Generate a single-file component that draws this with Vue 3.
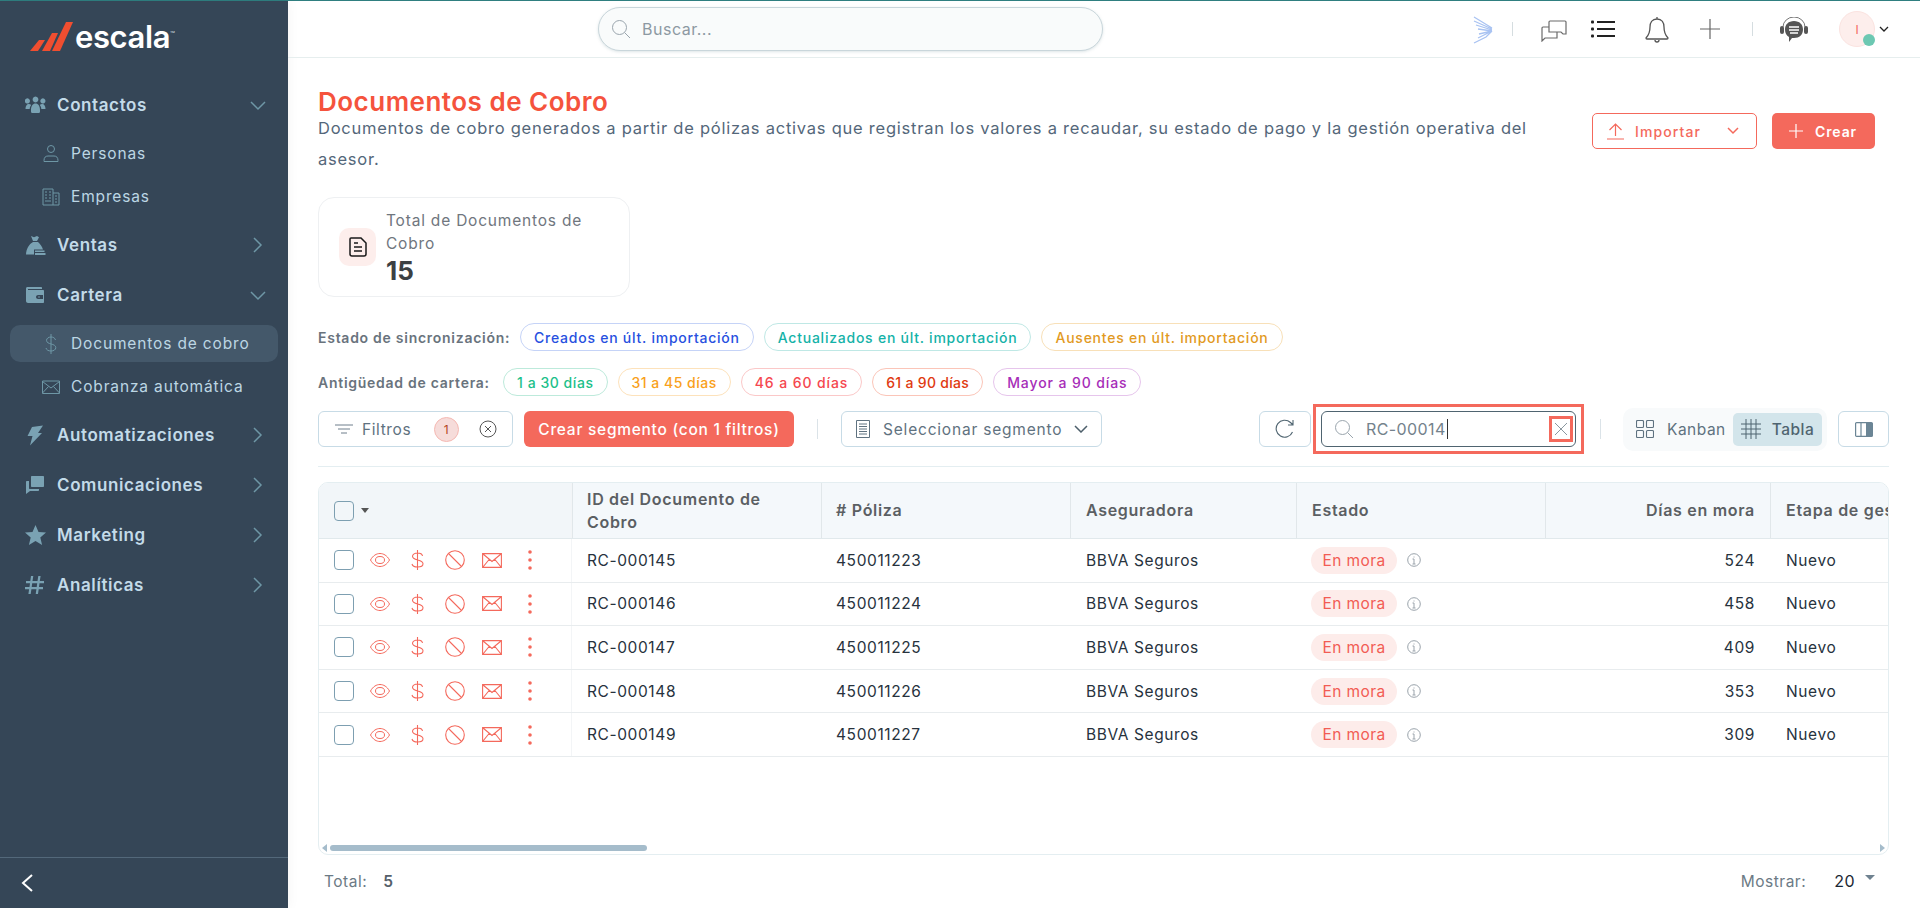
<script setup>
const icons = {
  people: 'M5 6a2.600 2.600 0 1 1 0-.01zM20.500 6a2.600 2.600 0 1 1 0-.01zM13.400 4.500a2.900 2.900 0 1 1 0-.01zM.500 14c0-3 1.200-5 3.300-5 1 0 1.800.3 2.400 1-1 1.200-1.500 2.500-1.500 4zM20.500 14c0-3-1.200-5-3.300-5-1 0-1.800.3-2.400 1 1 1.200 1.500 2.500 1.500 4zM6 15c0-4 1.800-6.500 4.500-6.500S15 11 15 15v1.500c0 1-.8 1.500-1.500 1.500h-6c-.7 0-1.500-.5-1.500-1.500z',
  bag: 'M6 1l3 1.200L12 1l2 1.200-2 3.800H8zM8 7h5c2 1.500 4 4.500 5 7.500H9v5H1C1.200 14 4 9 8 7zM10 15.500h9.500V17H10zM10 18h10.500v2H10z',
  wallet: 'M2 2h14c.6 0 1 .4 1 1v1H3v1h15c.6 0 1 .4 1 1v11c0 .6-.4 1-1 1H3c-1 0-2-1-2-2V4c0-1 .4-2 1-2zm11 8c-1 0-2 .8-2 2s1 2 2 2h5v-4zm1 1.200a.8.800 0 1 1 0 1.600.8.800 0 0 1 0-1.600z',
  bolt: 'M7 2L18 .5 13 8h4L5 20.500 7.500 11h-5z',
  chat: 'M7 1h11c.6 0 1 .4 1 1v9c0 .6-.4 1-1 1h-2v0H7c-.6 0-1-.4-1-1V2c0-.6.4-1 1-1zM4 6v7c0 .6.4 1 1 1h9v1c0 .6-.4 1-1 1H5l-4 3V7c0-.6.4-1 1-1z',
  star: 'M10.500 0l3 7 7.500.6-5.700 5 1.800 7.400-6.600-4-6.600 4 1.800-7.400L0 7.600 7.500 7z',
  hash: 'M6 1h2.300L7.500 6h5l.8-5h2.300l-.8 5H19v2.200h-4.500L14 12h4v2.200h-4.300L13 19h-2.300l.7-4.800h-5L5.700 19H3.400l.7-4.800H0V12h4.500L5 8.200H1V6h4.300zm1.200 7.200L6.700 12h5l.5-3.800z'
}

const sideMenu = [
  { label: 'Contactos', icon: 'people', open: true, children: [
    { label: 'Personas', icon: 'person' },
    { label: 'Empresas', icon: 'building' }
  ] },
  { label: 'Ventas', icon: 'bag' },
  { label: 'Cartera', icon: 'wallet', open: true, children: [
    { label: 'Documentos de cobro', icon: 'dollar', active: true },
    { label: 'Cobranza automática', icon: 'mail' }
  ] },
  { label: 'Automatizaciones', icon: 'bolt' },
  { label: 'Comunicaciones', icon: 'chat' },
  { label: 'Marketing', icon: 'star' },
  { label: 'Analíticas', icon: 'hash' }
]

const syncChips = [
  { text: 'Creados en últ. importación', cls: 'blue' },
  { text: 'Actualizados en últ. importación', cls: 'teal' },
  { text: 'Ausentes en últ. importación', cls: 'amber' }
]
const ageChips = [
  { text: '1 a 30 días', cls: 'green' },
  { text: '31 a 45 días', cls: 'orange' },
  { text: '46 a 60 días', cls: 'red' },
  { text: '61 a 90 días', cls: 'deep' },
  { text: 'Mayor a 90 días', cls: 'purple' }
]

const rows = [
  { id: 'RC-000145', poliza: '450011223', dias: 524 },
  { id: 'RC-000146', poliza: '450011224', dias: 458 },
  { id: 'RC-000147', poliza: '450011225', dias: 409 },
  { id: 'RC-000148', poliza: '450011226', dias: 353 },
  { id: 'RC-000149', poliza: '450011227', dias: 309 }
]
</script>

<template>
  <div class="app">
    <aside class="sidebar">
      <div class="logo">
        <svg width="46" height="32" viewBox="0 0 46 32">
          <polygon fill="#f04e30" points="9,19 15,19 8,30 0,30" />
          <polygon fill="#f04e30" points="22,12 28,12 20,30 12,30" />
          <polygon fill="#f04e30" points="36,1 43,1 30,30 22,30" />
        </svg>
        <span class="logo-text">escala</span><span class="logo-tm">™</span>
      </div>
      <nav class="menu">
        <template v-for="item in sideMenu" :key="item.label">
          <div class="menu-item">
            <svg class="menu-icon" width="21" height="21" viewBox="0 0 21 21"><path :d="icons[item.icon]" fill="#7aa2b3" fill-rule="evenodd" /></svg>
            <span class="menu-label">{{ item.label }}</span>
            <svg class="menu-arrow" width="16" height="16" viewBox="0 0 16 16" fill="none" stroke="#6e97a6" stroke-width="1.500">
              <path v-if="item.open" d="M1 5l7 7 7-7" />
              <path v-else d="M4 1l7 7-7 7" />
            </svg>
          </div>
          <div v-for="sub in item.children" :key="sub.label" class="sub-item" :class="{ active: sub.active }">
            <svg class="sub-icon" width="20" height="20" viewBox="0 0 20 20" fill="none" stroke="#6e97a6" stroke-width="1">
              <template v-if="sub.icon === 'person'">
                <circle cx="10" cy="5" r="3.500" />
                <path d="M3 16.500c0-3 1.500-4.500 4-4.500h6c2.500 0 4 1.500 4 4.500v1H3z" />
              </template>
              <template v-else-if="sub.icon === 'building'">
                <path d="M2 2h10v16H2zM12 6h6v12h-6M4 5h2M8 5h2M4 8h2M8 8h2M4 11h2M8 11h2M4 14h6M14 9h2M14 12h2M14 15h2" />
              </template>
              <template v-else-if="sub.icon === 'dollar'">
                <path d="M14.500 6c-.5-2-2.300-3-4.500-3S5.500 4.300 5.500 6.300C5.500 11 14.800 9 14.800 13.700c0 2-2.200 3.300-4.800 3.300s-4.500-1-5-3M10 0v20" />
              </template>
              <template v-else>
                <path d="M1.500 4h17v12.500h-17zM1.500 4.500L10 11l8.500-6.500M1.500 16L7.500 9.500M18.500 16l-6-6.500" />
              </template>
            </svg>
            <span>{{ sub.label }}</span>
          </div>
        </template>
      </nav>
      <div class="side-foot">
        <svg width="14" height="20" viewBox="0 0 14 20" fill="none" stroke="#fff" stroke-width="2"><path d="M12 2L3 10l9 8" /></svg>
      </div>
    </aside>

    <div class="main">
      <header class="topbar">
        <div class="global-search">
          <svg width="20" height="20" viewBox="0 0 20 20" fill="none" stroke="#9aa5ad" stroke-width="1"><circle cx="8.500" cy="8.500" r="7" /><path d="M13.500 13.500l5.500 5.500" /></svg>
          <span>Buscar...</span>
        </div>
        <div class="top-icons">
          <svg class="wing" width="22" height="28" viewBox="0 0 22 28" fill="none" stroke="#a9c3f2" stroke-width="1.300">
            <path d="M3 1l18 11M3 5l18 8M5 9l16 5M7 13l14 2M8 18l13-3M7 22l14-7M3 27l12-6 6-6" />
          </svg>
          <i class="top-sep first"></i>
          <svg class="t-chat" width="26" height="22" viewBox="0 0 26 22" fill="none" stroke="#6b6b6b" stroke-width="1.200">
            <path d="M9 1h15c.6 0 1 .4 1 1v12h-3l-2-2H8V2c0-.6.4-1 1-1zM8 7H2c-.6 0-1 .4-1 1v13l3-3h12v-6" />
          </svg>
          <svg class="t-list" width="24" height="18" viewBox="0 0 24 18" stroke="#222" stroke-width="1.800" fill="#222">
            <path d="M6 2h18M6 9h18M6 16h18" fill="none" />
            <rect x="0" y="0.500" width="3" height="3" rx="1" stroke="none" /><rect x="0" y="7.500" width="3" height="3" rx="1" stroke="none" /><rect x="0" y="14.500" width="3" height="3" rx="1" stroke="none" />
          </svg>
          <svg class="t-bell" width="24" height="27" viewBox="0 0 24 27" fill="none" stroke="#555" stroke-width="1.300">
            <path d="M12 3c-5 0-7 4-7 8 0 5-1 8-4 11 0 .6.400 1 1 1h20c.6 0 1-.4 1-1-3-3-4-6-4-11 0-4-2-8-7-8zM12 1v2M10 24a2 2 0 0 0 4 0" />
          </svg>
          <svg class="t-plus" width="20" height="20" viewBox="0 0 20 20" stroke="#666" stroke-width="1.200"><path d="M10 0v20M0 10h20" /></svg>
          <i class="top-sep second"></i>
          <svg class="t-help" width="28" height="26" viewBox="0 0 28 26">
            <path d="M3 10a11 10 0 0 1 22 0" fill="none" stroke="#777" stroke-width="1" />
            <rect x="0" y="9" width="4" height="8" rx="2" fill="#555" /><rect x="24" y="9" width="4" height="8" rx="2" fill="#555" />
            <path d="M14 4c5.500 0 9 3.500 9 8.500S19.500 21 14 21h-2l-3 4v-5c-2.500-1.500-4-4-4-7.500C5 7.500 8.500 4 14 4z" fill="#555" />
            <path d="M9 10h10M9 13h10M10 16h8" stroke="#fff" stroke-width="1.300" />
          </svg>
          <div class="avatar">I<b class="dot"></b></div>
          <svg class="t-caret" width="10" height="6" viewBox="0 0 10 6" fill="none" stroke="#222" stroke-width="1.300"><path d="M1 1l4 4 4-4" /></svg>
        </div>
      </header>

      <section class="page">
        <div class="page-head">
          <div class="head-text">
            <h1>Documentos de Cobro</h1>
            <p>Documentos de cobro generados a partir de pólizas activas que registran los valores a recaudar, su estado de pago y la gestión operativa del<br />asesor.</p>
          </div>
          <div class="head-actions">
            <button class="btn-import">
              <svg width="17" height="17" viewBox="0 0 17 17" fill="none" stroke="#f4695c" stroke-width="1.200"><path d="M0 16h17M8.500 13V1M2.500 7l6-6 6 6" /></svg>
              <span>Importar</span>
              <svg class="import-arrow" width="12" height="8" viewBox="0 0 12 8" fill="none" stroke="#f4695c" stroke-width="1.500"><path d="M1 1l5 5 5-5" /></svg>
            </button>
            <button class="btn-create">
              <svg width="14" height="14" viewBox="0 0 14 14" stroke="#fff" stroke-width="1.200"><path d="M7 0v14M0 7h14" /></svg>
              <span>Crear</span>
            </button>
          </div>
        </div>

        <div class="stat-card">
          <div class="stat-icon">
            <svg width="18" height="20" viewBox="0 0 18 20" fill="none" stroke="#1a1a1a" stroke-width="1.500">
              <path d="M2 1h10l5 5v11c0 1-1 2-2 2H3c-1 0-2-1-2-2V2c0-.6.4-1 1-1zM5 6h4M5 10h8M5 14h8" />
            </svg>
          </div>
          <div class="stat-body">
            <div class="stat-label">Total de Documentos de Cobro</div>
            <div class="stat-value">15</div>
          </div>
        </div>

        <div class="chip-row sync">
          <span class="chip-title">Estado de sincronización:</span>
          <span v-for="c in syncChips" :key="c.text" class="chip" :class="c.cls">{{ c.text }}</span>
        </div>
        <div class="chip-row age">
          <span class="chip-title">Antigüedad de cartera:</span>
          <span v-for="c in ageChips" :key="c.text" class="chip" :class="c.cls">{{ c.text }}</span>
        </div>

        <div class="toolbar">
          <div class="filter-btn">
            <svg width="18" height="10" viewBox="0 0 18 10" stroke="#6f7f8c" stroke-width="1"><path d="M0 1h18M3 5h12M6 9h6" /></svg>
            <span class="filter-text">Filtros</span>
            <span class="filter-count">1</span>
            <svg class="filter-clear" width="18" height="18" viewBox="0 0 18 18" fill="none" stroke="#555" stroke-width="1"><circle cx="9" cy="9" r="8" /><path d="M6 6l6 6M12 6l-6 6" /></svg>
          </div>
          <button class="btn-segment">Crear segmento (con 1 filtros)</button>
          <i class="tool-sep sep-a"></i>
          <div class="segment-select">
            <svg width="14" height="18" viewBox="0 0 14 18" fill="none" stroke="#5f7280" stroke-width="1"><path d="M.5.500h13v17H.500zM3 4h8M3 6.500h8M3 9h8M3 11.500h8M3 14h8" /></svg>
            <span>Seleccionar segmento</span>
            <svg class="select-arrow" width="14" height="8" viewBox="0 0 14 8" fill="none" stroke="#4d5f6b" stroke-width="1.500"><path d="M1 1l6 6 6-6" /></svg>
          </div>
          <button class="btn-refresh">
            <svg width="20" height="20" viewBox="0 0 20 20" fill="none" stroke="#4f6470" stroke-width="1.100"><path d="M17.500 13a8.500 8.500 0 1 1-2-9.500l2.500 2.500M18 1v5h-5" /></svg>
          </button>
          <div class="search-mark">
            <div class="table-search">
              <svg width="20" height="20" viewBox="0 0 20 20" fill="none" stroke="#9aa5ad" stroke-width="1"><circle cx="8.500" cy="8.500" r="7" /><path d="M13.500 13.500l5.500 5.500" /></svg>
              <span class="search-value">RC-00014</span>
              <span class="clear-mark">
                <svg width="14" height="14" viewBox="0 0 14 14" stroke="#8b979f" stroke-width="1"><path d="M1 1l12 12M13 1L1 13" /></svg>
              </span>
            </div>
          </div>
          <i class="tool-sep sep-b"></i>
          <div class="view-toggle">
            <span class="view-opt kanban">
              <svg width="18" height="18" viewBox="0 0 18 18" fill="none" stroke="#5f7280" stroke-width="1.100"><rect x=".5" y=".5" width="7" height="7" rx="1" /><rect x="10.500" y=".5" width="7" height="7" rx="1" /><rect x=".5" y="10.500" width="7" height="7" rx="1" /><rect x="10.500" y="10.500" width="7" height="7" rx="1" /></svg>
              Kanban
            </span>
            <span class="view-opt on">
              <svg width="20" height="20" viewBox="0 0 20 20" stroke="#4f6470" stroke-width="1"><path d="M5 0v20M10 0v20M15 0v20M0 5h20M0 10h20M0 15h20" /></svg>
              Tabla
            </span>
          </div>
          <button class="btn-panel">
            <svg width="18" height="15" viewBox="0 0 18 15"><rect x=".6" y=".6" width="16.800" height="13.800" rx="1" fill="none" stroke="#6b8595" stroke-width="1.200" /><rect x="11" y="1" width="6.500" height="13" fill="#6b8595" /><path d="M6 1v13" stroke="#6b8595" stroke-width="1.200" /></svg>
          </button>
        </div>

        <div class="divider"></div>

        <div class="table-card">
          <div class="table-scroll">
            <div class="t-row t-head">
              <div class="t-cell first">
                <span class="check"></span>
                <i class="caret"></i>
              </div>
              <div class="t-cell">ID del Documento de Cobro</div>
              <div class="t-cell"># Póliza</div>
              <div class="t-cell">Aseguradora</div>
              <div class="t-cell">Estado</div>
              <div class="t-cell right">Días en mora</div>
              <div class="t-cell wide">Etapa de gestión</div>
            </div>
            <div v-for="r in rows" :key="r.id" class="t-row t-line">
              <div class="t-cell first">
                <span class="check"></span>
                <span class="row-actions">
                  <svg width="20" height="14" viewBox="0 0 20 14" fill="none" stroke="#f4695c" stroke-width="1"><path d="M.5 7C3 2.500 6.500.5 10 .5s7 2 9.500 6.500c-2.500 4.500-6 6.500-9.500 6.500S3 11.500.5 7z" /><ellipse cx="10" cy="7" rx="4.500" ry="3.500" /></svg>
                  <svg width="13" height="20" viewBox="0 0 13 20" fill="none" stroke="#f4695c" stroke-width="1.100"><path d="M11.500 6c-.3-2-2.500-3-5-3S1.500 4.300 1.500 6.300C1.500 11 12 9 12 13.700c0 2-2.500 3.300-5.500 3.300S1.500 16 1 14M6.500 0v20" /></svg>
                  <svg width="20" height="20" viewBox="0 0 20 20" fill="none" stroke="#f4695c" stroke-width="1.100"><circle cx="10" cy="10" r="9.300" /><path d="M3.500 3.500l13 13" /></svg>
                  <svg width="20" height="15" viewBox="0 0 20 15" fill="none" stroke="#f4695c" stroke-width="1.100"><path d="M.6.600h18.800v13.800H.600zM1 1l9 7.500L19 1M1 14l6.500-8M19 14l-6.500-8" /></svg>
                  <svg width="4" height="20" viewBox="0 0 4 20" fill="#f4695c"><circle cx="2" cy="2" r="1.800" /><circle cx="2" cy="10" r="1.800" /><circle cx="2" cy="18" r="1.800" /></svg>
                </span>
              </div>
              <div class="t-cell">{{ r.id }}</div>
              <div class="t-cell">{{ r.poliza }}</div>
              <div class="t-cell">BBVA Seguros</div>
              <div class="t-cell">
                <span class="status">En mora</span>
                <svg class="info" width="14" height="14" viewBox="0 0 14 14" fill="none" stroke="#9aa3ab" stroke-width="1"><circle cx="7" cy="7" r="6.300" /><path d="M7 6v5M5.500 6H7M5.500 11h3M7 3.500v1" /></svg>
              </div>
              <div class="t-cell right">{{ r.dias }}</div>
              <div class="t-cell wide">Nuevo</div>
            </div>
          </div>
          <div class="scrollbar">
            <i class="sb-left"></i>
            <i class="sb-thumb"></i>
            <i class="sb-right"></i>
          </div>
        </div>

        <div class="foot">
          <div class="foot-total"><span>Total:</span><b>5</b></div>
          <div class="foot-show"><span>Mostrar:</span><em>20</em><i class="show-caret"></i></div>
        </div>
      </section>
    </div>
  </div>
</template>

<style>
html,
body {
  margin: 0;
  height: 100%;
  overflow: hidden;
  background: #fff;
}
</style>

<style scoped>
.app {
  display: flex;
  height: 908px;
  width: 1920px;
  font-family: Inter, "Noto Sans", sans-serif;
  border-top: 1px solid #2f7f80;
  box-sizing: border-box;
  color: #1f2d3d;
}

/* sidebar */
.sidebar {
  width: 288px;
  flex: none;
  background: #354657;
  display: flex;
  flex-direction: column;
  box-shadow: 0 0 12px rgba(0, 0, 0, 0.05);
}
.logo {
  display: flex;
  align-items: flex-start;
  height: 79px;
  padding: 20px 0 0 30px;
  box-sizing: border-box;
}
.logo-text {
  color: #fff;
  font-size: 31px;
  font-weight: 600;
  line-height: 34px;
  letter-spacing: -0.4px;
  margin-left: -1px;
  margin-top: -1px;
}
.logo-tm {
  color: #c8d2d8;
  font-size: 8px;
  line-height: 12px;
  margin-top: 7px;
}
.menu {
  display: flex;
  flex-direction: column;
}
.menu-item {
  display: flex;
  align-items: center;
  height: 50px;
  flex: none;
  padding: 0 0 0 25px;
  color: #c3dbe9;
  font-size: 17px;
  font-weight: 600;
  letter-spacing: 0.6px;
}
.menu-icon {
  flex: none;
}
.menu-label {
  margin-left: 11px;
  flex: 1;
}
.menu-arrow {
  margin-right: 22px;
}
.sub-item {
  display: flex;
  align-items: center;
  height: 37px;
  flex: none;
  margin: 3px 10px;
  padding-left: 31px;
  border-radius: 10px;
  color: #bcd6e4;
  font-size: 15.500px;
  letter-spacing: 0.85px;
}
.menu-item + .sub-item {
  margin-top: 5px;
}
.sub-item + .menu-item {
  margin-top: 2px;
}
.sub-item span {
  margin-left: 10px;
}
.sub-item.active {
  background: #44586a;
}
.side-foot {
  margin-top: auto;
  border-top: 1px solid #53687a;
  height: 50px;
  display: flex;
  align-items: center;
  padding-left: 20px;
}

/* top bar */
.main {
  flex: 1;
  min-width: 0;
  display: flex;
  flex-direction: column;
}
.topbar {
  height: 57px;
  flex: none;
  box-sizing: border-box;
  border-bottom: 1px solid #e6eeee;
  display: flex;
  align-items: flex-start;
  padding-left: 310px;
}
.global-search {
  width: 505px;
  height: 44px;
  margin-top: 6px;
  box-sizing: border-box;
  border: 1px solid #c9d6db;
  border-radius: 22px;
  background: #f9fbfb;
  box-shadow: 0 1px 3px rgba(120, 150, 160, 0.25);
  display: flex;
  align-items: center;
  padding-left: 12px;
  color: #8d99a2;
  font-size: 16px;
  letter-spacing: 0.5px;
}
.global-search span {
  margin-left: 11px;
}
.top-icons {
  margin-left: auto;
  display: flex;
  align-items: center;
  height: 56px;
  padding-right: 31px;
}
.wing {
  margin-top: 2px;
}
.top-sep {
  width: 1px;
  height: 14px;
  background: #d5dde0;
}
.top-sep.first {
  margin: 0 28px 0 19px;
}
.t-chat {
  margin-top: 4px;
}
.t-list {
  margin: 0 0 1px 24px;
}
.t-bell {
  margin-left: 30px;
}
.t-plus {
  margin-left: 31px;
}
.top-sep.second {
  margin: 0 27px 0 32px;
}
.t-help {
  margin-top: 2px;
}
.avatar {
  position: relative;
  width: 36px;
  height: 36px;
  box-sizing: border-box;
  margin-left: 31px;
  border-radius: 50%;
  background: #fdeeec;
  border: 1px solid #fbe3e0;
  color: #f4695c;
  font-size: 12px;
  display: flex;
  align-items: center;
  justify-content: center;
}
.dot {
  position: absolute;
  right: -1px;
  bottom: 0;
  width: 12px;
  height: 12px;
  border-radius: 50%;
  background: #6cc8b2;
}
.t-caret {
  margin-left: 4px;
}

/* page */
.page {
  flex: 1;
  padding: 30px 31px 0 30px;
  min-height: 0;
}
.page-head {
  display: flex;
  justify-content: space-between;
}
.head-text h1 {
  margin: 0;
  color: #f5533d;
  font-size: 26px;
  line-height: 28px;
  font-weight: 600;
  letter-spacing: 0.5px;
}
.head-text p {
  margin: -3px 0 0;
  color: #54677a;
  font-size: 16.500px;
  line-height: 31px;
  letter-spacing: 0.76px;
  white-space: nowrap;
}
.head-actions {
  display: flex;
  gap: 15px;
  margin: 25px 14px 0 0;
}
button {
  font-family: inherit;
  cursor: pointer;
}
.btn-import {
  width: 165px;
  height: 36px;
  box-sizing: border-box;
  border: 1px solid #f4695c;
  border-radius: 5px;
  background: #fff;
  color: #f4695c;
  font-size: 14px;
  font-weight: 500;
  letter-spacing: 1.1px;
  display: flex;
  align-items: center;
  padding: 0 0 0 14px;
}
.btn-import span {
  margin-left: 11px;
}
.import-arrow {
  margin-left: auto;
  margin-right: 17px;
}
.btn-create {
  width: 103px;
  height: 36px;
  border: 0;
  border-radius: 5px;
  background: #f4695c;
  color: #fff;
  font-size: 14px;
  font-weight: 600;
  letter-spacing: 0.9px;
  display: flex;
  align-items: center;
  padding-left: 17px;
}
.btn-create span {
  margin-left: 12px;
}
.stat-card {
  width: 312px;
  height: 100px;
  margin-top: 22px;
  box-sizing: border-box;
  border: 1px solid #eef0f2;
  border-radius: 16px;
  display: flex;
  align-items: center;
  padding-left: 20px;
}
.stat-icon {
  width: 37px;
  height: 38px;
  flex: none;
  background: #fdeeec;
  border-radius: 10px;
  display: flex;
  align-items: center;
  justify-content: center;
}
.stat-body {
  margin-left: 10px;
  width: 225px;
}
.stat-label {
  color: #70767e;
  font-size: 15.500px;
  line-height: 23px;
  letter-spacing: 0.8px;
}
.stat-value {
  color: #3c4043;
  font-size: 26px;
  line-height: 30px;
  font-weight: 700;
  margin-top: 1px;
}
.chip-row {
  display: flex;
  align-items: center;
  height: 28px;
}
.chip-row.sync {
  margin-top: 26px;
}
.chip-row.age {
  margin-top: 17px;
}
.chip-title {
  color: #69737d;
  font-size: 14px;
  font-weight: 600;
  letter-spacing: 0.73px;
}
.sync .chip-title {
  width: 202px;
}
.age .chip-title {
  width: 185px;
}
.chip {
  height: 28px;
  box-sizing: border-box;
  border: 1px solid;
  border-radius: 14px;
  display: flex;
  align-items: center;
  padding: 0 13px;
  margin-right: 10px;
  font-size: 14px;
  font-weight: 500;
  letter-spacing: 0.76px;
  white-space: nowrap;
}
.blue { color: #2750e0; border-color: #c5d3f7; }
.teal { color: #14b2a8; border-color: #bfe8e5; }
.amber { color: #e29a1f; border-color: #f8e0b8; }
.green { color: #1cbf8a; border-color: #bdeadb; letter-spacing: 0.55px; }
.orange { color: #f9a11b; border-color: #fde2bb; letter-spacing: 0.5px; }
.red { color: #f5474f; border-color: #fbc8c8; letter-spacing: 0.9px; }
.deep { color: #e03a10; border-color: #fbc5b8; letter-spacing: 0.3px; }
.purple { color: #a72db8; border-color: #e6c5ec; letter-spacing: 0.9px; }

/* toolbar */
.toolbar {
  display: flex;
  align-items: center;
  height: 36px;
  margin-top: 15px;
}
.filter-btn {
  width: 195px;
  height: 36px;
  box-sizing: border-box;
  border: 1px solid #c7dbe6;
  border-radius: 6px;
  display: flex;
  align-items: center;
  padding-left: 16px;
  color: #5f7280;
  font-size: 15.500px;
  letter-spacing: 0.6px;
}
.filter-text {
  margin-left: 9px;
  width: 50px;
}
.filter-count {
  width: 25px;
  height: 25px;
  margin-left: 22px;
  box-sizing: border-box;
  border: 1px solid #f5b9b3;
  border-radius: 50%;
  background: #f6dcda;
  color: #b2451f;
  font-size: 12px;
  display: flex;
  align-items: center;
  justify-content: center;
}
.filter-clear {
  margin-left: 20px;
}
.btn-segment {
  width: 270px;
  height: 36px;
  margin-left: 11px;
  border: 0;
  border-radius: 6px;
  background: #f4695c;
  color: #fff;
  font-size: 15.500px;
  font-weight: 500;
  letter-spacing: 0.73px;
  padding: 0;
}
.tool-sep {
  width: 1px;
  height: 20px;
  background: #dbe3e8;
}
.sep-a {
  margin: 0 23px;
}
.segment-select {
  width: 261px;
  height: 36px;
  box-sizing: border-box;
  border: 1px solid #c7dbe6;
  border-radius: 6px;
  display: flex;
  align-items: center;
  padding-left: 14px;
  color: #5f7280;
  font-size: 15.500px;
  letter-spacing: 0.8px;
}
.segment-select span {
  margin-left: 13px;
}
.select-arrow {
  margin-left: auto;
  margin-right: 13px;
}
.btn-refresh {
  margin-left: auto;
  width: 52px;
  height: 36px;
  box-sizing: border-box;
  background: #fff;
  border: 1px solid #c7dbe6;
  border-radius: 6px;
  display: flex;
  align-items: center;
  justify-content: center;
  padding: 0;
}
.search-mark {
  flex: none;
  margin-left: 2px;
  border: 3px solid #f4695c;
  padding: 4px 5px;
  width: 271px;
  box-sizing: border-box;
}
.table-search {
  height: 36px;
  box-sizing: border-box;
  border: 1px solid #4f6470;
  border-radius: 6px;
  display: flex;
  align-items: center;
  padding-left: 12px;
  font-size: 16px;
  letter-spacing: 0.4px;
  color: #74828c;
}
.search-value {
  margin-left: 12px;
  padding-right: 1px;
  border-right: 1px solid #333;
  line-height: 20px;
}
.clear-mark {
  margin-left: auto;
  margin-right: 2px;
  width: 24px;
  height: 26px;
  box-sizing: border-box;
  border: 3px solid #f4695c;
  display: flex;
  align-items: center;
  justify-content: center;
}
.sep-b {
  margin: 0 22px 0 16px;
}
.view-toggle {
  width: 204px;
  height: 43px;
  box-sizing: border-box;
  background: #f8fafb;
  border-radius: 10px;
  display: flex;
  align-items: center;
  padding: 0 5px 0 13px;
  color: #5f7280;
  font-size: 15.500px;
  letter-spacing: 0.5px;
}
.view-opt {
  display: flex;
  align-items: center;
  gap: 11px;
}
.view-opt.kanban {
  gap: 13px;
}
.view-opt.on {
  margin-left: auto;
  width: 89px;
  height: 33px;
  justify-content: center;
  background: #d3e5eb;
  border-radius: 5px;
  color: #4f6470;
  font-weight: 500;
}
.btn-panel {
  width: 51px;
  height: 36px;
  margin-left: 11px;
  box-sizing: border-box;
  background: #fff;
  border: 1px solid #c7dbe6;
  border-radius: 6px;
  display: flex;
  align-items: center;
  justify-content: center;
  padding: 0;
}
.divider {
  height: 1px;
  margin-top: 19px;
  background: #e4eef1;
}

/* table */
.table-card {
  height: 373px;
  margin-top: 15px;
  box-sizing: border-box;
  border: 1px solid #e4eef1;
  border-radius: 10px;
  display: flex;
  flex-direction: column;
  overflow: hidden;
}
.table-scroll {
  flex: 1;
  overflow: hidden;
}
.t-row {
  display: grid;
  grid-template-columns: 253px 249px 249px 226px 249px 225px 300px;
  width: 1751px;
}
.t-head {
  height: 56px;
  background: #f4f8fb;
  border-bottom: 1px solid #e1e9ec;
  box-sizing: border-box;
  color: #5b5f63;
  font-size: 16px;
  font-weight: 600;
  line-height: 23px;
  letter-spacing: 0.7px;
}
.t-head .t-cell:nth-child(2),
.t-head .t-cell:nth-child(3) {
  padding-left: 14px;
}
.t-line {
  height: 43.600px;
  box-sizing: border-box;
  border-bottom: 1px solid #e8ecee;
  color: #27323d;
  font-size: 15.500px;
  letter-spacing: 0.6px;
}
.t-line .t-cell:nth-child(4),
.t-line .t-cell:nth-child(7) {
  padding-left: 16px;
}
.t-cell {
  display: flex;
  align-items: center;
  padding: 0 15px;
  min-width: 0;
}
.t-head .t-cell {
  border-left: 1px solid #e1e7ea;
}
.t-head .t-cell.first {
  border-left: 0;
  background: #f2f6f9;
}
.t-cell.first {
  padding: 0 0 0 15px;
  border-right: 1px solid #f3f5f7;
}
.t-cell.right {
  justify-content: flex-end;
}
.check {
  width: 20px;
  height: 20px;
  flex: none;
  box-sizing: border-box;
  border: 1px solid #7d9fb1;
  border-radius: 4px;
}
.caret {
  margin-left: 7px;
  border: 4.500px solid transparent;
  border-top: 5px solid #555;
  border-bottom: 0;
}
.row-actions {
  display: grid;
  grid-template-columns: repeat(5, 37.500px);
  justify-items: center;
  align-items: center;
  margin-left: 7px;
}
.status {
  height: 27px;
  width: 86px;
  flex: none;
  background: #fdecea;
  border-radius: 14px;
  color: #f25c54;
  display: flex;
  align-items: center;
  justify-content: center;
  font-size: 15.500px;
  letter-spacing: 0.4px;
}
.info {
  margin-left: 10px;
}
.scrollbar {
  height: 9px;
  flex: none;
  margin-bottom: 2px;
  display: flex;
  align-items: center;
  padding: 0 3px;
}
.sb-left {
  border: 4px solid transparent;
  border-right: 5px solid #a5bccb;
  border-left: 0;
}
.sb-thumb {
  width: 317px;
  height: 6px;
  margin-left: 3px;
  background: #a5bccb;
  border-radius: 3px;
}
.sb-right {
  margin-left: auto;
  border: 4px solid transparent;
  border-left: 5px solid #a5bccb;
  border-right: 0;
}
.foot {
  display: flex;
  justify-content: space-between;
  align-items: center;
  height: 52px;
  padding: 0 14px 0 6px;
  font-size: 15.500px;
  letter-spacing: 0.5px;
  color: #6c7a85;
}
.foot-total b {
  margin-left: 16px;
  color: #55606a;
  font-weight: 600;
}
.foot-show {
  display: flex;
  align-items: center;
}
.foot-show em {
  font-style: normal;
  color: #1b2733;
  margin-left: 28px;
  font-size: 16px;
}
.show-caret {
  margin: -8px 0 0 10px;
  border: 5px solid transparent;
  border-top: 5px solid #6f8290;
  border-bottom: 0;
}
</style>
